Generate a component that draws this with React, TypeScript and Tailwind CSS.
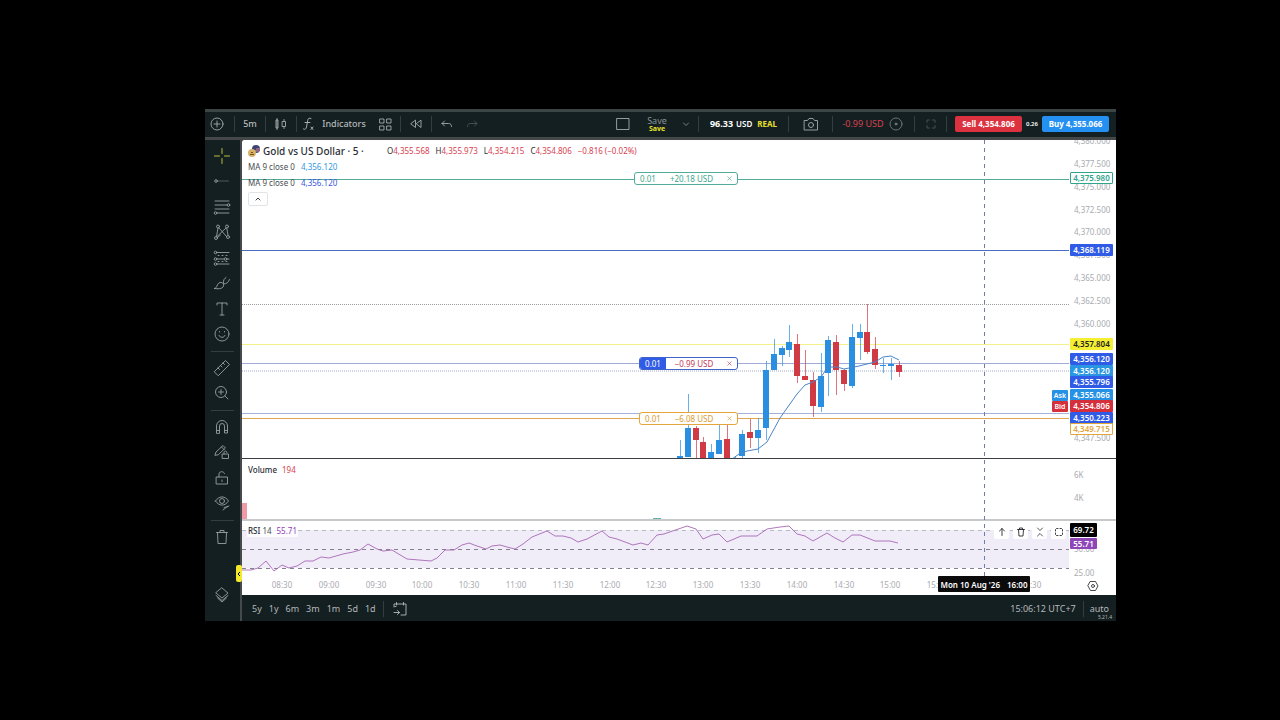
import type { ReactNode } from "react"

type Candle = [high: number, top: number, bottom: number, low: number, up: boolean]

const CANDLES: Candle[] = [
  [300, 316, 319, 319, true],
  [254, 288, 317, 317, true],
  [286, 288, 300, 319, false],
  [297, 302, 319, 319, false],
  [304, 312, 319, 319, true],
  [285, 300, 314, 314, true],
  [285, 299, 319, 319, false],
  [317, 318, 319, 319, true],
  [290, 294, 316, 319, true],
  [279, 292, 298, 308, false],
  [278, 290, 298, 313, true],
  [221, 230, 288, 300, true],
  [199, 214, 230, 230, true],
  [206, 208, 215, 226, true],
  [185, 202, 210, 217, true],
  [194, 204, 236, 243, false],
  [210, 236, 240, 240, false],
  [232, 240, 266, 277, false],
  [213, 236, 267, 272, true],
  [196, 200, 233, 256, true],
  [195, 202, 230, 255, false],
  [229, 230, 244, 251, false],
  [184, 197, 246, 248, true],
  [184, 192, 198, 220, true],
  [164, 192, 212, 214, false],
  [197, 209, 225, 229, false],
  [218, 225, 226, 233, true],
  [218, 224, 226, 240, true],
  [221, 225, 232, 237, false],
]

const MA_POINTS =
  "490,319 497,314 505,311 516,309 525,302 538,278 555,254 563,245 571,242 579,237 586,227 595,227 602,229 617,226 633,222 641,217 649,216 657,220"

const RSI_POINTS =
  "0,49 9,49 16,47 24,40 32,50 40,44 47,47 55,45 63,40 71,40 79,36 87,37 101,33 111,31 118,29 126,23 135,28 141,30 150,29 165,38 189,40 195,37 203,29 212,29 220,24 227,22 235,25 244,28 250,25 258,24 265,26 273,28 281,23 290,16 305,10 313,15 321,15 329,17 336,21 345,18 360,10 367,16 375,18 391,24 399,22 406,24 415,14 422,13 445,5 454,8 461,18 470,14 477,13 485,21 499,15 515,15 525,8 538,6 547,5 555,13 563,15 571,20 585,12 593,17 601,21 610,14 618,14 633,20 648,20 656,22"

const PRICE_TICKS = [
  "4,380.000", "4,377.500", "4,375.000", "4,372.500", "4,370.000", "4,367.500", "4,365.000",
  "4,362.500", "4,360.000", "", "", "", "", "4,347.500",
]

const TIME_TICKS = [
  "08:30", "09:00", "09:30", "10:00", "10:30", "11:00", "11:30", "12:00", "12:30",
  "13:00", "13:30", "14:00", "14:30", "15:00", "15:30", "", "16:30",
]

const PRICE_TAGS = [
  { y: 38, text: "4,375.980", style: "border border-[#2fa58c] bg-white text-[#2fa58c]" },
  { y: 110, text: "4,368.119", style: "bg-[#2f5be7] text-white" },
  { y: 204, text: "4,357.804", style: "bg-[#f5ee33] text-[#222]" },
  { y: 219, text: "4,356.120", style: "bg-[#2f5be7] text-white" },
  { y: 231, text: "4,356.120", style: "bg-[#2b97e3] text-white" },
  { y: 242, text: "4,355.796", style: "bg-[#2f5be7] text-white" },
  { y: 255, text: "4,355.066", style: "bg-[#2592e6] text-white" },
  { y: 266, text: "4,354.806", style: "bg-[#d62f3c] text-white" },
  { y: 278, text: "4,350.223", style: "bg-[#2f5be7] text-white" },
  { y: 289, text: "4,349.715", style: "border border-[#e3a53c] bg-white text-[#e3a53c]" },
]

function Icon({ size = 18, children }: { size?: number; children: ReactNode }) {
  return (
    <svg
      width={size}
      height={size}
      viewBox={`0 0 ${size} ${size}`}
      fill="none"
      stroke="currentColor"
      strokeWidth=".9"
      strokeLinecap="round"
      strokeLinejoin="round"
      className="shrink-0"
    >
      {children}
    </svg>
  )
}

function Sep() {
  return <span className="h-4 w-px shrink-0 bg-[#343d3f]" />
}

function BarButton({ label, className, children }: { label: string; className: string; children: ReactNode }) {
  return (
    <button type="button" aria-label={label} className={`flex h-6 shrink-0 items-center justify-center ${className}`}>
      {children}
    </button>
  )
}

function TopBar() {
  return (
    <header className="flex h-[31px] items-center border-t-[3px] border-b-[3px] border-t-[#3c4546] border-b-[#454849] pr-[7px] pb-px text-[#a4aaab]">
      <BarButton label="Add symbol" className="w-6">
        <Icon>
          <circle cx="9" cy="9" r="6" />
          <path d="M9 6v6M6 9h6" />
        </Icon>
      </BarButton>
      <span className="w-[5px]" />
      <Sep />
      <BarButton label="Interval" className="w-[30px] text-[9px] font-medium text-[#b4b9ba]">5m</BarButton>
      <Sep />
      <BarButton label="Chart type" className="w-[30px]">
        <Icon>
          <path d="M5 3.500v11M5 5H4v8h2V5H5M12 4.500v2M12 11.500v2M10.500 6.500h3v5h-3z" />
        </Icon>
      </BarButton>
      <Sep />
      <BarButton label="Indicators" className="w-[72px] gap-1 text-[9px] font-medium text-[#b4b9ba]">
        <Icon>
          <path d="M11 3.500c-2-1-3 0-3.300 2L6.500 12c-.4 2-1.500 3-3 2M5 7.500h5M11 12l2 2.500M13 12l-2 2.500" />
        </Icon>
        Indicators
      </BarButton>
      <BarButton label="Templates" className="w-[31px]">
        <Icon>
          <path d="M4 4h4v4H4zM11 4h4v4h-4zM4 11h4v4H4zM11 11h4v4h-4z" />
        </Icon>
      </BarButton>
      <Sep />
      <BarButton label="Replay" className="w-[30px]">
        <Icon>
          <path d="M8.500 5.500v7l-4.500-3.500zM14 5.500v7l-4.500-3.500z" />
        </Icon>
      </BarButton>
      <Sep />
      <BarButton label="Undo" className="w-[30px]">
        <Icon>
          <path d="M6.500 6l-2.500 2.500 2.500 2.500M4 8.500h6.500c2 0 3 1 3 3" />
        </Icon>
      </BarButton>
      <BarButton label="Redo" className="w-5 text-[#4b5456]">
        <Icon>
          <path d="M11.500 6l2.500 2.500-2.500 2.500M14 8.500H7.500c-2 0-3 1-3 3" />
        </Icon>
      </BarButton>

      <div className="ml-auto flex items-center">
        <BarButton label="Layout" className="w-5">
          <Icon>
            <rect x="3" y="3.500" width="12" height="11" />
          </Icon>
        </BarButton>
        <button type="button" className="ml-2 flex w-[32px] flex-col items-center">
          <span className="text-[9px] leading-[9px] text-[#8b9294]">Save</span>
          <span className="text-[7px] leading-[7px] font-bold text-[#e8e02c]">Save</span>
        </button>
        <BarButton label="Save options" className="w-[25px] text-[#858c8e]">
          <Icon size={12}>
            <path d="M3.500 5l2.500 2.500L8.500 5" />
          </Icon>
        </BarButton>
        <Sep />
        <span className="w-[89px] text-center text-[9px] whitespace-nowrap">
          <b className="mr-[3px] text-white">96.33</b>
          <span className="text-[8px] font-semibold text-white">USD</span>
          <b className="ml-[5px] text-[8px] text-[#e8e02c]">REAL</b>
        </span>
        <Sep />
        <BarButton label="Snapshot" className="w-[43px]">
          <Icon>
            <path d="M2.500 5.500h3L7 3.500h4l1.500 2h3v9.500h-13z" />
            <circle cx="9" cy="10" r="2.500" />
          </Icon>
        </BarButton>
        <Sep />
        <span className="flex w-[81px] items-center justify-center gap-[3px] text-[9px] whitespace-nowrap text-[#d8414f]">
          -0.99 USD
          <span className="text-[#727a7c]">
            <Icon>
              <circle cx="9" cy="9" r="6" />
              <circle cx="9" cy="9" r="1" fill="currentColor" />
            </Icon>
          </span>
        </span>
        <Sep />
        <BarButton label="Fullscreen" className="w-[31px] text-[#4b5456]">
          <Icon>
            <path d="M5 7.500V5h2.500M10.500 5H13v2.500M13 10.500V13h-2.500M7.500 13H5v-2.500" />
          </Icon>
        </BarButton>
        <Sep />
        <button type="button" className="ml-2 h-4 w-[67px] rounded-[2px] bg-[#dc323f] text-[8px] font-bold whitespace-nowrap text-white">
          Sell 4,354.806
        </button>
        <span className="w-5 text-center text-[6px] font-semibold text-white">0.26</span>
        <button type="button" className="h-4 w-[67px] rounded-[2px] bg-[#2390f2] text-[8px] font-bold whitespace-nowrap text-white">
          Buy 4,355.066
        </button>
      </div>
    </header>
  )
}

function Tool({ label, children }: { label: string; children: ReactNode }) {
  return (
    <button type="button" aria-label={label} className="flex w-full flex-1 items-center justify-center">
      <Icon size={20}>{children}</Icon>
    </button>
  )
}

function ToolSep() {
  return (
    <div className="flex h-2 items-center">
      <span className="h-px w-[23px] bg-[#343d3f]" />
    </div>
  )
}

function Sidebar() {
  return (
    <nav className="relative flex w-[37px] shrink-0 flex-col items-center border-r-2 border-[#45494b] pt-[3px] pr-px text-[#999fa1]">
      <div className="flex h-[204px] w-full flex-col">
        <button type="button" aria-label="Crosshair" className="flex w-full flex-1 items-center justify-center text-[#cbd23c]">
          <Icon size={20}>
            <path d="M10 2.500v5M10 12.500v5M2.500 10h5M12.500 10h5" />
          </Icon>
        </button>
        <Tool label="Trend line">
          <circle cx="4" cy="10" r="1.300" />
          <path d="M5.500 10h11" opacity=".5" />
        </Tool>
        <Tool label="Fib retracement">
          <path d="M3 4h14M3 8h12M3 12h14M5 16h12" />
          <circle cx="16.500" cy="8" r="1.300" />
          <circle cx="3.500" cy="16" r="1.300" />
        </Tool>
        <Tool label="Patterns">
          <path d="M4.500 14.500L6 6M7 6l7.500 8.500M5 14.500L14 6M14.800 6.500L16 13M5.500 15.500l3-2.500" />
          <circle cx="6" cy="4.500" r="1.500" />
          <circle cx="15" cy="4.500" r="1.500" />
          <circle cx="4" cy="16" r="1.500" />
          <circle cx="16" cy="15" r="1.500" />
        </Tool>
        <Tool label="Prediction">
          <path d="M5 4.500h12M5 11h7M14.500 11H17M5 16h12" />
          <path d="M6 7.500h9M6 13.500h10" strokeDasharray="1 3" />
          <circle cx="3.500" cy="4.500" r="1.300" />
          <circle cx="3.500" cy="11" r="1.300" />
          <circle cx="3.500" cy="16" r="1.300" />
          <circle cx="13.500" cy="11" r="1.300" />
        </Tool>
        <Tool label="Brush">
          <path d="M2.500 15.500c3 0 2-5 5.500-6 3-.5 4.500 2 3 4.500-1.500 2-5 2-8.500 1.500zM11.500 10c-.5-3 1-4.500 2.500-5.500M11.500 11c3 0 5-1.500 6-4.500" />
        </Tool>
        <Tool label="Text">
          <path d="M5 6V4h10v2M10 4v12M8 16h4" />
        </Tool>
        <Tool label="Icons">
          <circle cx="10" cy="10" r="7" />
          <path d="M7 11.500c.5 2.500 5.500 2.500 6 0M7.500 7.500v.5M12.500 7.500v.5" />
        </Tool>
      </div>
      <ToolSep />
      <div className="flex h-[51px] w-full flex-col">
        <Tool label="Measure">
          <path d="M2.500 13.500l11-11 4 4-11 11zM6 10l1.500 1.500M8.500 7.500L10 9M11 5l1.500 1.500" />
        </Tool>
        <Tool label="Zoom in">
          <circle cx="9" cy="9" r="5.500" />
          <path d="M9 6.500v5M6.500 9h5M13 13l3 3" />
        </Tool>
      </div>
      <ToolSep />
      <div className="flex h-[102px] w-full flex-col">
        <Tool label="Magnet">
          <path d="M4.500 16V9a5.500 5.500 0 0111 0v7h-3V9a2.500 2.500 0 00-5 0v7zM4.500 13.500h3M12.500 13.500h3" />
        </Tool>
        <Tool label="Stay in drawing mode">
          <path d="M3 13l1-3 7-6.500 2.500 2.500-7 6.500zM9.500 5l2.500 2.500" />
          <path d="M10.500 12h6v4.500h-6zM12 12v-1.500c0-2 3-2 3 0" />
        </Tool>
        <Tool label="Lock drawings">
          <path d="M4.500 9h11v7h-11zM7 9V6c0-3 5-3 5.500-.5M10 12v1.500" />
        </Tool>
        <Tool label="Hide drawings">
          <path d="M3.500 8c3.500-5.500 9.500-5.500 13 0-3.500 5.500-9.500 5.500-13 0z" />
          <circle cx="10" cy="8" r="2.500" />
          <path d="M11 17l5-4M12 14.500c2-1 4 0 5-1.500" />
        </Tool>
      </div>
      <ToolSep />
      <div className="flex h-[26px] w-full">
        <Tool label="Remove drawings">
          <path d="M4.500 5.500h11M8 5.500v-2h4v2M5.500 5.500L6 16.500h8l.5-11" />
        </Tool>
      </div>
      <div className="mt-8 flex h-[26px] w-full">
        <Tool label="Object tree">
          <path d="M10 3l6 5-6 5-6-5zM4 10.500l6 5 6-5M5.500 13l4.500 4 4.500-4" />
        </Tool>
      </div>
      <button
        type="button"
        aria-label="Toggle panel"
        className="absolute top-[425px] left-[31px] flex h-[17px] w-[6px] items-center justify-center rounded-[2px] bg-[#f3e82b] text-black"
      >
        <svg width="4" height="6" viewBox="0 0 4 6" fill="none" stroke="currentColor">
          <path d="M3 1L1 3l2 2" />
        </svg>
      </button>
    </nav>
  )
}

function OrderLabel({ y, lots, pnl, style, lotStyle }: { y: number; lots: string; pnl: string; style: string; lotStyle: string }) {
  return (
    <div
      className={`absolute flex h-[13px] items-center overflow-hidden rounded-[3px] border bg-white text-[8px] leading-[11px] whitespace-nowrap ${style}`}
      style={{ top: y - 6 }}
    >
      <span className={`flex h-full w-[26px] items-center justify-center ${lotStyle}`}>{lots}</span>
      <span className="flex-1 text-center">{pnl}</span>
      <button type="button" aria-label="Close order" className="flex h-full w-[15px] items-center justify-center">
        <svg width="5" height="5" viewBox="0 0 5 5" stroke="currentColor" strokeWidth=".6">
          <path d="M.5.5l4 4M4.500.5l-4 4" />
        </svg>
      </button>
    </div>
  )
}

function Legend() {
  return (
    <div className="absolute top-[3px] left-[6px] text-[8px] whitespace-nowrap text-[#4a4d52]">
      <div className="flex h-4 items-center">
        <svg width="12" height="12" viewBox="0 0 12 12" className="mr-[3px]">
          <circle cx="8" cy="4" r="4" fill="#3f4470" />
          <path d="M8 4h4M7 6h4" stroke="#d98a93" />
          <circle cx="4" cy="8" r="4" fill="#d8b365" />
          <path d="M2 9.500h4M3 7.500h2" stroke="#6e5220" />
        </svg>
        <span className="w-[124px] text-[10px] font-medium text-[#2b2e35]">Gold vs US Dollar · 5 ·</span>
        <span className="flex gap-[6px] text-[#d8414f]">
          <span><span className="text-[#2b2e35]">O</span>4,355.568</span>
          <span><span className="text-[#2b2e35]">H</span>4,355.973</span>
          <span><span className="text-[#2b2e35]">L</span>4,354.215</span>
          <span><span className="text-[#2b2e35]">C</span>4,354.806</span>
          <span>−0.816 (−0.02%)</span>
        </span>
      </div>
      <div className="flex h-4 items-center">
        <span className="w-[53px]">MA 9 close 0</span>
        <span className="text-[#3399e0]">4,356.120</span>
      </div>
      <div className="flex h-4 items-center">
        <span className="w-[53px]">MA 9 close 0</span>
        <span className="text-[#3857dd]">4,356.120</span>
      </div>
      <button type="button" aria-label="Collapse legend" className="mt-px flex h-[14px] w-5 items-center justify-center rounded-[2px] border border-[#e2e3e6] bg-white text-[#222]">
        <Icon size={8}>
          <path d="M2 5l2-2 2 2" />
        </Icon>
      </button>
    </div>
  )
}

function PricePane() {
  return (
    <section className="flex h-[319px] border-b border-[#3c3e44]">
      <div className="relative min-w-0 flex-1">
        <svg width="100%" height="318" className="block" shapeRendering="crispEdges">
          <g>
            <rect y="39" width="100%" height="1" fill="#52ab9b" />
            <rect y="110" width="100%" height="1" fill="#4a6dc4" />
            <rect y="204" width="100%" height="1" fill="#f4f08a" />
            <rect y="223" width="100%" height="1" fill="#9fabd6" />
            <rect y="273" width="100%" height="1" fill="#a3b4dc" />
            <rect y="278" width="100%" height="1" fill="#dfa550" />
          </g>
          <line x1="0" x2="100%" y1="164.500" y2="164.500" stroke="#9b9ba0" strokeDasharray="1 1" />
          <line x1="0" x2="100%" y1="231" y2="231" stroke="#d0d4e2" strokeWidth="2" strokeDasharray="1 1" />
          {CANDLES.map(([high, top, bottom, low, up], i) => {
            const x = Math.round(438 + i * 7.81)
            const color = up ? "#2a8fe0" : "#d03a45"
            return (
              <g key={i} fill={color}>
                <rect x={x} y={high} width="1" height={low - high} opacity=".7" />
                <rect x={x - 3} y={top} width="6" height={bottom - top} />
              </g>
            )
          })}
          <polyline points={MA_POINTS} fill="none" stroke="#4b86c9" shapeRendering="auto" />
        </svg>
        <Legend />
        <OrderLabel y={38} lots="0.01" pnl="+20.18 USD" style="left-[392px] w-[104px] border-[#52ab9b] text-[#3aa78f]" lotStyle="" />
        <OrderLabel y={223} lots="0.01" pnl="−0.99 USD" style="left-[397px] w-[99px] border-[#3f63c8] text-[#c23a55]" lotStyle="bg-[#2f5be7] text-white" />
        <OrderLabel y={278} lots="0.01" pnl="−6.08 USD" style="left-[397px] w-[99px] border-[#e3a53c] text-[#dd9a2c]" lotStyle="" />
        <span className="absolute top-[250px] right-px h-[11px] w-4 rounded-[1px] bg-[#2592e6] text-center text-[7px] leading-[11px] font-semibold text-white">Ask</span>
        <span className="absolute top-[261px] right-px h-[11px] w-4 rounded-[1px] bg-[#d62f3c] text-center text-[7px] leading-[11px] font-semibold text-white">Bid</span>
      </div>
      <div className="relative w-[47px] shrink-0 overflow-hidden text-[8px] leading-[12px]">
        {PRICE_TICKS.map((tick, i) => (
          <span key={i} className="absolute left-[5px] text-[#a9abb0]" style={{ top: Math.round(i * 22.85) - 5 }}>
            {tick}
          </span>
        ))}
        {PRICE_TAGS.map((tag) => (
          <span
            key={tag.y}
            className={`absolute left-px flex h-3 w-[43px] items-center justify-center rounded-[1px] font-semibold ${tag.style}`}
            style={{ top: tag.y - 6 }}
          >
            {tag.text}
          </span>
        ))}
      </div>
    </section>
  )
}

function VolumePane() {
  return (
    <section className="flex h-[62px] border-b-2 border-[#c6c8ca] text-[8px]">
      <div className="relative min-w-0 flex-1">
        <svg width="100%" height="60" className="block">
          <rect x="0" y="44" width="5" height="16" fill="#ef9aa5" />
          <rect x="411" y="59" width="8" height="1" fill="#5fb3a4" />
        </svg>
        <div className="absolute top-[5px] left-[6px] leading-3">
          <span className="font-medium text-[#2b2e35]">Volume</span>
          <span className="ml-[5px] text-[#d8414f]">194</span>
        </div>
      </div>
      <div className="flex w-[47px] shrink-0 flex-col gap-[11px] pt-[10px] pl-[5px] leading-3 text-[#a9abb0]">
        <span>6K</span>
        <span>4K</span>
      </div>
    </section>
  )
}

function PaneButton({ label, children }: { label: string; children: ReactNode }) {
  return (
    <button type="button" aria-label={label} className="flex h-[14px] w-[15px] items-center justify-center rounded-[2px] bg-white text-[#26282e]">
      <Icon size={10}>{children}</Icon>
    </button>
  )
}

function RsiPane() {
  return (
    <section className="flex h-[74px] text-[8px]">
      <div className="relative min-w-0 flex-1 overflow-hidden">
        <svg width="100%" height="74" className="block">
          <rect x="0" y="9" width="100%" height="38" fill="#f0edf8" />
          <g stroke="#85808f" strokeDasharray="4 4">
            <line x1="0" x2="100%" y1="9.500" y2="9.500" stroke="#b5bcc4" />
            <line x1="0" x2="100%" y1="28.500" y2="28.500" />
            <line x1="0" x2="100%" y1="47.500" y2="47.500" />
          </g>
          <polyline points={RSI_POINTS} fill="none" stroke="#a668b5" strokeWidth=".9" />
        </svg>
        <div className="absolute top-1 left-[5px] bg-white/80 px-px leading-3 text-[#4a4d52]">
          <span className="font-medium text-[#2b2e35]">RSI</span> 14
          <span className="ml-[5px] text-[#9143b3]">55.71</span>
        </div>
        {TIME_TICKS.map((tick, i) =>
          tick ? (
            <span key={tick} className="absolute top-[58px] w-8 text-center leading-3 text-[#a9abb0]" style={{ left: Math.round(24 + i * 46.8) }}>
              {tick}
            </span>
          ) : null,
        )}
        <div className="absolute top-1 right-[3px] flex gap-1">
          <PaneButton label="Move pane up">
            <path d="M5 8.500v-7M2.500 4L5 1.500 7.500 4" />
          </PaneButton>
          <PaneButton label="Delete pane">
            <path d="M1.500 2.500h7M3.500 2.500V1h3v1.500M2.500 2.500L3 9h4l.5-6.500" />
          </PaneButton>
          <PaneButton label="Collapse pane">
            <path d="M2.500 1L5 3.500 7.500 1M2.500 9L5 6.500 7.500 9" strokeWidth=".8" />
          </PaneButton>
          <PaneButton label="Maximize pane">
            <path d="M1.500 4V2.500l1-1H4M6 1.500h1.500l1 1V4M8.500 6v1.500l-1 1H6M4 8.500H2.500l-1-1V6" />
          </PaneButton>
        </div>
      </div>
      <div className="relative w-[47px] shrink-0 leading-3 text-[#a9abb0]">
        <span className="absolute top-[22px] left-[5px]">50.00</span>
        <span className="absolute top-[46px] left-[5px]">25.00</span>
        <span className="absolute top-[2px] left-px h-[14px] w-[27px] rounded-[1px] bg-black text-center leading-[14px] font-semibold text-white">69.72</span>
        <span className="absolute top-[17px] left-px h-[11px] w-[27px] rounded-[1px] bg-[#8f46b8] text-center leading-[11px] font-semibold text-white">55.71</span>
        <button type="button" aria-label="Chart settings" className="absolute top-[59px] left-[18px] text-[#33363c]">
          <Icon size={12}>
            <path d="M3.500 1.500h5L11 6l-2.500 4.500h-5L1 6z" />
            <circle cx="6" cy="6" r="1.500" />
          </Icon>
        </button>
      </div>
    </section>
  )
}

function BottomBar() {
  return (
    <footer className="relative flex h-[26px] items-center pt-px pr-[7px] pl-[10px] text-[9px] text-[#b4b9ba]">
      <div className="flex gap-[7px]">
        {["5y", "1y", "6m", "3m", "1m", "5d", "1d"].map((range) => (
          <button key={range} type="button">{range}</button>
        ))}
      </div>
      <span className="w-[7px]" />
      <Sep />
      <BarButton label="Go to date" className="ml-[6px] w-5">
        <Icon>
          <path d="M3 7V4h12v11h-5M4 6.500h1M5.500 2.500V5M12.500 2.500V5M3 12.500h5.500M6.500 10.500l2 2-2 2" />
        </Icon>
      </BarButton>
      <button type="button" className="ml-auto">15:06:12 UTC+7</button>
      <span className="w-[7px]" />
      <Sep />
      <button type="button" className="ml-[6px]">auto</button>
      <span className="absolute right-1 bottom-px text-[5px] leading-[6px]">5.21.4</span>
    </footer>
  )
}

export default function App() {
  return (
    <div className="min-h-screen bg-black pt-[109px] pr-[164px] pb-[99px] pl-[205px] font-['Noto_Sans',sans-serif]">
      <div className="bg-[#141f21]">
        <TopBar />
        <div className="flex">
          <Sidebar />
          <div className="min-w-0 flex-1">
            <main className="relative rounded-tl-[2px] bg-white">
              <PricePane />
              <VolumePane />
              <RsiPane />
              <svg width="1" height="437" className="pointer-events-none absolute top-0 left-[742px]">
                <line x1=".5" x2=".5" y1="0" y2="437" stroke="#6f7bb0" strokeDasharray="4 4" />
              </svg>
              <div className="absolute bottom-[3px] left-[696px] flex h-4 w-[92px] items-center justify-center gap-[7px] rounded-[1px] bg-[#0b0b0c] pt-[2px] text-[8px] font-semibold whitespace-nowrap text-white">
                <span>Mon 10 Aug '26</span>
                <span>16:00</span>
              </div>
            </main>
            <BottomBar />
          </div>
        </div>
      </div>
    </div>
  )
}
